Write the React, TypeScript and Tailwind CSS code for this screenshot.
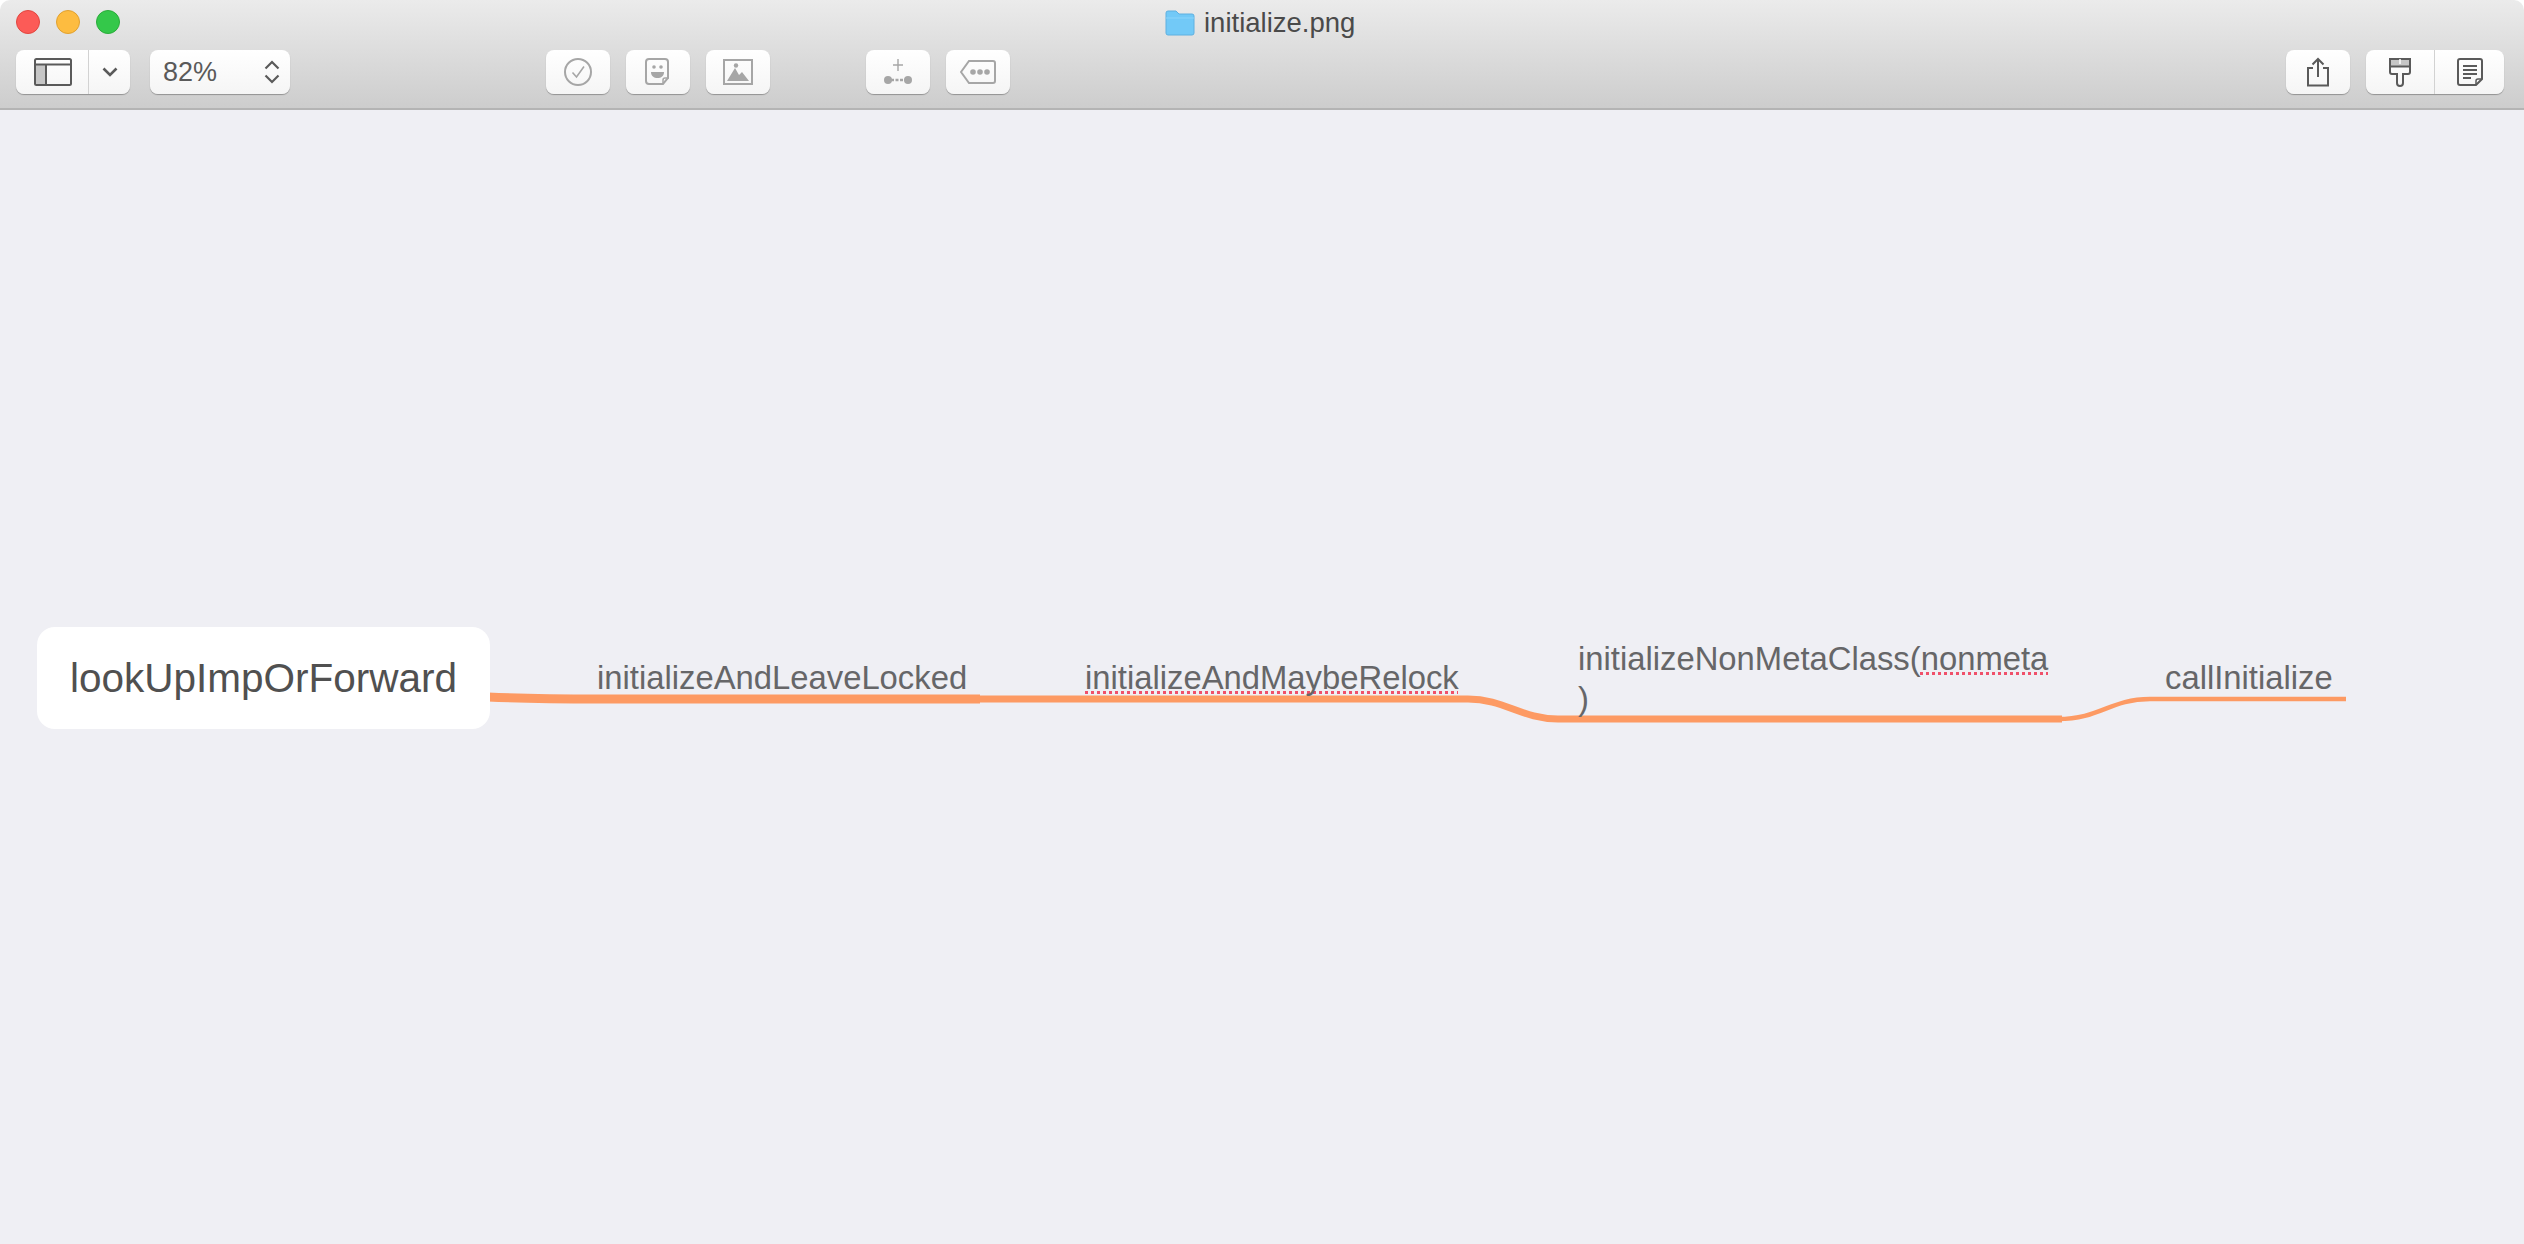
const ink = '#5a5a5a'
const dim = '#a6a6a6'

function ToolButton({ className = '', justify = 'justify-center', children }: { className?: string; justify?: string; children?: React.ReactNode }) {
  return (
    <div className={`flex h-[44px] items-center rounded-[8px] bg-gradient-to-b from-white to-[#f5f5f5] shadow-[0_1px_1px_rgba(0,0,0,0.3)] ${justify} ${className}`}>
      {children}
    </div>
  )
}

function Icon({ w, h, children }: { w: number; h: number; children: React.ReactNode }) {
  return (
    <svg width={w} height={h} viewBox={`0 0 ${w} ${h}`} fill="none">
      {children}
    </svg>
  )
}

function Toolbar() {
  return (
    <div className="relative h-[110px] shrink-0 rounded-t-[10px] border-b-2 border-[#b4b4b4] bg-gradient-to-b from-[#ebebeb] to-[#cdcdcd]">
      {/* window title row */}
      <div className="relative flex h-[44px] items-center pl-[16px]">
        <div className="flex gap-[16px]">
          <span className="h-[24px] w-[24px] rounded-full border border-[#e2463f] bg-[#fc5b57]" />
          <span className="h-[24px] w-[24px] rounded-full border border-[#e1a12f] bg-[#fdbc40]" />
          <span className="h-[24px] w-[24px] rounded-full border border-[#2aac3a] bg-[#34c84a]" />
        </div>
        <div className="absolute left-[1165px] top-[7px] flex items-center gap-[9px]">
          <Icon w={30} h={26}>
            <path d="M1 3a2 2 0 0 1 2-2h8l3 3h13a2 2 0 0 1 2 2v17a2 2 0 0 1-2 2H3a2 2 0 0 1-2-2z" fill="#72c9f7" stroke="#5eb0e0" />
            <path d="M1 8h28" stroke="#8bd4fa" />
          </Icon>
          <span className="text-[27.500px] leading-[32px] text-[#4a4a4a]">initialize.png</span>
        </div>
      </div>

      {/* buttons */}
      <div className="mt-[6px] flex items-start pl-[16px] pr-[20px]">
        <ToolButton className="w-[114px]">
          <div className="flex h-full w-[73px] items-center justify-center border-r border-[#d2d2d2] pl-[2px]">
            <Icon w={38} h={28}>
              <rect x="1" y="1" width="36" height="26" rx="1.5" stroke={ink} strokeWidth="2" />
              <rect x="2" y="7" width="10" height="19" fill="#c6c6c6" />
              <path d="M1 6.5h36M12 6.5V27" stroke={ink} strokeWidth="2" />
            </Icon>
          </div>
          <div className="flex flex-1 items-center justify-center">
            <Icon w={16} h={10}>
              <path d="M1.5 1.5 8 8l6.5-6.5" stroke={ink} strokeWidth="2.6" />
            </Icon>
          </div>
        </ToolButton>

        <ToolButton justify="justify-between" className="ml-[20px] w-[140px] pl-[13px] pr-[10px]">
          <span className="text-[27px] text-[#5a5a5a]">82%</span>
          <Icon w={16} h={24}>
            <path d="M1.5 8.5 8 2l6.5 6.5M1.5 15.5 8 22l6.5-6.5" stroke={ink} strokeWidth="2.2" />
          </Icon>
        </ToolButton>

        <ToolButton className="ml-[256px] w-[64px]">
          <Icon w={30} h={30}>
            <circle cx="15" cy="15" r="13" stroke={dim} strokeWidth="2" />
            <path d="M9.5 15.5 13.5 20 21 9.5" stroke={dim} strokeWidth="1.6" />
          </Icon>
        </ToolButton>
        <ToolButton className="ml-[16px] w-[64px]">
          <Icon w={30} h={30}>
            <path d="M20 27H6a3 3 0 0 1-3-3V5a3 3 0 0 1 3-3h16a3 3 0 0 1 3 3v16z" stroke={dim} strokeWidth="2" />
            <path d="M20 27v-4a2 2 0 0 1 2-2h4" stroke={dim} strokeWidth="1.5" />
            <circle cx="11" cy="10" r="1.8" fill={dim} />
            <circle cx="18" cy="10" r="1.8" fill={dim} />
            <path d="M8 15h13c0 4-3 6-6.500 6S8 19 8 15z" fill={dim} />
          </Icon>
        </ToolButton>
        <ToolButton className="ml-[16px] w-[64px]">
          <Icon w={30} h={26}>
            <rect x="1" y="1" width="28" height="24" stroke={dim} strokeWidth="2" />
            <path d="M4 22 12 9l4 7 3-3 7 9z" fill={dim} />
            <circle cx="13" cy="6.500" r="2.200" fill={dim} />
          </Icon>
        </ToolButton>

        <ToolButton className="ml-[96px] w-[64px]">
          <Icon w={30} h={30}>
            <path d="M15 2v12M10 8h10" stroke={dim} strokeWidth="1.4" />
            <circle cx="5" cy="23" r="4" fill={dim} />
            <circle cx="25" cy="23" r="4" fill={dim} />
            <path d="M8 23h14" stroke={dim} strokeWidth="2.500" strokeDasharray="3 1.500" />
          </Icon>
        </ToolButton>
        <ToolButton className="ml-[16px] w-[64px]">
          <Icon w={36} h={24}>
            <path d="M9 1h24a2 2 0 0 1 2 2v18a2 2 0 0 1-2 2H9l-8-11z" stroke={dim} strokeWidth="2" />
            <circle cx="13" cy="12" r="2.800" fill={dim} />
            <circle cx="20" cy="12" r="2.800" fill={dim} />
            <circle cx="27" cy="12" r="2.800" fill={dim} />
          </Icon>
        </ToolButton>

        <ToolButton className="ml-auto w-[64px]">
          <Icon w={24} h={30}>
            <path d="M7 11H2v17.500h20V11h-5" stroke={ink} strokeWidth="2" />
            <path d="M12 20V2M6.500 7.500 12 2l5.500 5.500" stroke={ink} strokeWidth="2" />
          </Icon>
        </ToolButton>
        <ToolButton className="ml-[16px] w-[138px]">
          <div className="flex h-full w-[69px] items-center justify-center border-r border-[#d2d2d2]">
            <Icon w={24} h={30}>
              <path d="M2 9V2h20v7z" fill="#c6c6c6" />
              <path d="M2 2h20v13a2 2 0 0 1-2 2h-5v9a3 3 0 0 1-6 0v-9H4a2 2 0 0 1-2-2zM2 9.500h20" stroke={ink} strokeWidth="2" />
              <path d="M12 2v5" stroke="#fff" strokeWidth="1.500" />
            </Icon>
          </div>
          <div className="flex flex-1 items-center justify-center">
            <Icon w={26} h={28}>
              <path d="M19 27H3a2 2 0 0 1-2-2V3a2 2 0 0 1 2-2h20a2 2 0 0 1 2 2v18z" stroke={ink} strokeWidth="2" />
              <path d="M19 27v-4a2 2 0 0 1 2-2h4" stroke={ink} strokeWidth="1.500" />
              <path d="M6 8h14M6 12h14M6 16h14M6 20h8" stroke={ink} strokeWidth="2" />
            </Icon>
          </div>
        </ToolButton>
      </div>
    </div>
  )
}

// the spell checker's dots under a word
function Misspelt({ children }: { children: React.ReactNode }) {
  return (
    <span className="underline decoration-[#f0506a] decoration-dotted decoration-[3px] underline-offset-[2px] [text-decoration-skip-ink:none]">
      {children}
    </span>
  )
}

function MindMap() {
  const label = 'absolute whitespace-nowrap text-[32.800px] leading-[38px] text-[#666668]'
  return (
    <div className="relative flex-1 bg-[#efeff4]">
      {/* connectors, coordinates relative to the canvas */}
      <svg className="absolute left-0 top-0" width="2524" height="1134" fill="none">
        <path d="M488 587C530 589 560 589 600 589H980" stroke="#fd9a63" strokeWidth="9" />
        <path d="M980 589H1468C1504 589 1522 609 1558 609H2062" stroke="#fd9a63" strokeWidth="7" />
        <path d="M2058 609C2100 609 2110 589 2150 589H2346" stroke="#fd9a63" strokeWidth="4.500" />
      </svg>

      <div className="absolute left-[37px] top-[517px] flex h-[102px] w-[453px] items-center justify-center rounded-[18px] bg-white text-[40.500px] text-[#505050]">
        lookUpImpOrForward
      </div>

      <div className={`${label} left-[597px] top-[549px]`}>initializeAndLeaveLocked</div>
      <div className={`${label} left-[1085px] top-[549px]`}>
        <Misspelt>initializeAndMaybeRelock</Misspelt>
      </div>
      <div className={`${label} left-[1578px] top-[529px] leading-[40px]`}>
        initializeNonMetaClass(<Misspelt>nonmeta</Misspelt>
        <br />)
      </div>
      <div className={`${label} left-[2165px] top-[549px]`}>callInitialize</div>
    </div>
  )
}

export default function App() {
  return (
    <div className="flex h-[1244px] w-[2524px] flex-col overflow-hidden bg-white font-['Liberation_Sans',sans-serif]">
      <Toolbar />
      <MindMap />
    </div>
  )
}
